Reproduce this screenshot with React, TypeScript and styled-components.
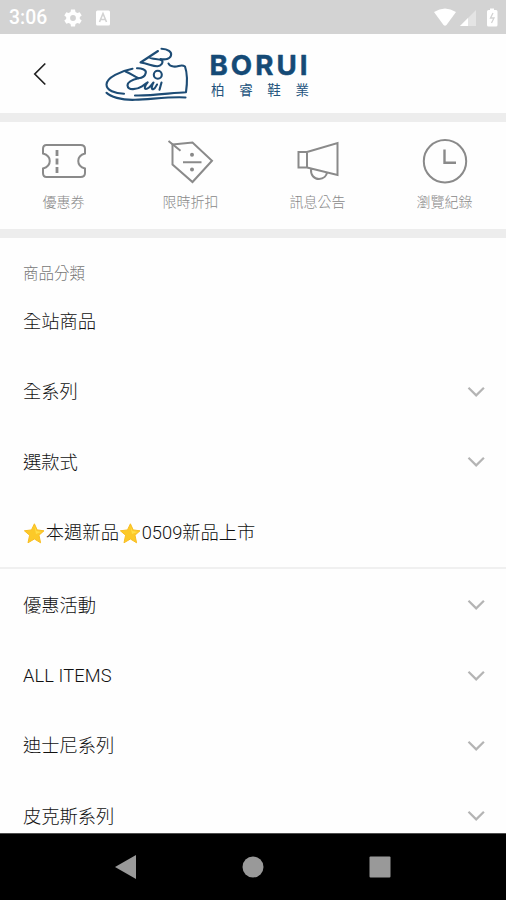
import React from "react";
import styled, { createGlobalStyle } from "styled-components";

const GlobalStyle = createGlobalStyle`
  * { box-sizing: border-box; }
  html, body { margin: 0; padding: 0; overflow: hidden; background: #fff; }
  svg { display: block; flex: none; }
`;

const Screen = styled.div`
  display: flex;
  flex-direction: column;
  width: 506px;
  height: 900px;
  overflow: hidden;
  background: #fefefe;
  font-family: Roboto, "Noto Sans CJK TC", sans-serif;
`;

const StatusBar = styled.div`
  display: flex;
  justify-content: space-between;
  align-items: center;
  flex: none;
  height: 34px;
  padding: 2px 8px 0 9px;
  background: #d3d3d3;
  color: #fff;
`;

const StatusGroup = styled.div<{ $gap: number }>`
  display: flex;
  align-items: center;
  gap: ${(p) => p.$gap}px;
`;

const Clock = styled.span`
  width: 40px;
  margin-right: 1px;
  font-size: 19.4px;
  font-weight: 500;
  line-height: 24px;
`;

const Header = styled.header`
  display: flex;
  align-items: center;
  flex: none;
  height: 79px;
  padding-left: 30px;
`;

const BackButton = styled.button`
  width: 20px;
  height: 28px;
  margin-right: 50px;
  padding: 0;
  border: 0;
  background: none;
`;

const Band = styled.div`
  flex: none;
  height: 9px;
  background: #ededed;
`;

const Shortcuts = styled.nav`
  display: grid;
  grid-template-columns: repeat(4, 127px);
  flex: none;
  height: 107px;
  padding-top: 15px;
`;

const Shortcut = styled.a`
  display: flex;
  flex-direction: column;
  align-items: center;
  color: #999;
`;

const ShortcutLabel = styled.span`
  margin-top: 5px;
  font-size: 14px;
  font-weight: 300;
  line-height: 20px;
  color: #888;
`;

const Catalog = styled.main`
  flex: 1;
  min-height: 0;
  overflow: hidden;
`;

const CatalogTitle = styled.h2`
  height: 47.4px;
  margin: 0;
  padding: 25px 0 0 23px;
  font-size: 15.5px;
  font-weight: 300;
  line-height: 22px;
  color: #777;
`;

const Row = styled.div`
  display: flex;
  align-items: center;
  justify-content: space-between;
  height: 70.3px;
  padding: 2px 21px 0 23px;
`;

const RowLabel = styled.span`
  display: flex;
  align-items: center;
  margin-top: 1px;
  font-size: 18.3px;
  font-weight: 300;
  line-height: 26px;
  color: #111;
  white-space: pre;
`;

const LatinLabel = styled.span`
  font-weight: 350;
  letter-spacing: 0.1px;
`;

const Divider = styled.div`
  height: 2px;
  margin-bottom: 0.6px;
  background: #f0f0f0;
`;

const NavBar = styled.footer`
  display: flex;
  justify-content: space-between;
  align-items: center;
  flex: none;
  height: 67px;
  padding: 0 115px;
  background: #000;
  border-top: 1px solid #4d4d4d;
`;

const Logo = () => (
  <svg width="220" height="66" viewBox="100 40 220 66" fill="none" stroke="#1d4c75" strokeWidth="2.1" strokeLinecap="round" strokeLinejoin="round">
    <path d="M132.5 67.8C121 70 106.5 76.5 106.5 83.5C106.5 89.5 115 92.5 124 92.7" />
    <path d="M106.5 91.8C110 95.5 121 99.3 135 98.8C153 98 171 95.5 185.5 96.5" />
    <path d="M135 94.5C150 95.2 174 91.5 186 91.2C187.3 82 187.3 72 185 65.5C181 62.5 178 66.5 173.5 65.5C170 65 169 64 168.5 62.5" />
    <path d="M158 50L140.5 61.5C148 62.5 153 65.5 157.5 65.2C161 65 163.5 61.5 162 59.5C159 57.5 152 58.5 149.5 56.5" />
    <path d="M161.5 47.8C168 48 172 51 171 54.5C170 58 165 59 160.5 58" />
    <path d="M137 67.2C141 67 146.5 68.5 145.8 71.7C145 75.5 142 77 138.5 77.2C133 78.5 127.5 80.5 127.5 84.3C128 90 137 88.5 142 85.3C144 84 146 82.5 147.7 81.3C145 84 143.8 88 146 88C149 88 151.5 84 153.5 81.5C151.5 85 151 88.5 153.3 88.2C155 87.7 156 85.5 157 83.5" />
    <path d="M125.5 70.5C130 72 134 75.5 138.5 77.2M161.5 81.5L159.5 88.7" />
    <circle cx="157.8" cy="73.8" r="4" />
    <text x="209.5" y="74" textLength="101" lengthAdjust="spacingAndGlyphs" letterSpacing="3" fill="#154a76" stroke="#154a76" strokeWidth=".5" fontFamily="Inter, sans-serif" fontWeight="700" fontSize="27.5">BORUI</text>
    <text x="211" y="93.5" textLength="98" fill="#24547d" stroke="none" fontFamily="Noto Sans CJK TC, sans-serif" fontWeight="400" fontSize="13.5">柏睿鞋業</text>
  </svg>
);

const ShortcutSvg = ({ children }: { children: React.ReactNode }) => (
  <svg width="50" height="50" viewBox="0 0 50 50" fill="none" stroke="#8a8a8a" strokeWidth="2">
    {children}
  </svg>
);

const TicketIcon = () => (
  <ShortcutSvg>
    <path d="M7.5 8H41.5Q46 8 46 12V16.5C37 19 37 29 46 31.5V36Q46 40 41.5 40H7.5Q4 40 4 36V31.5C13 29 13 19 4 16.5V12Q4 8 7.5 8Z" />
    <path d="M18 13V19M18 21.5V27.5M18 30V36" strokeWidth="2.8" />
  </ShortcutSvg>
);

const DiscountIcon = () => (
  <ShortcutSvg>
    <path d="M6.5 7.5L26.5 5.5L46 23.8L26.5 45L6.5 27.5Z" />
    <path d="M2.5 4L14.5 13.8M17 25.3H35.5" />
    <circle cx="26" cy="17.8" r="2" fill="#888" stroke="none" />
    <circle cx="26" cy="32.5" r="2" fill="#888" stroke="none" />
  </ShortcutSvg>
);

const MegaphoneIcon = () => (
  <ShortcutSvg>
    <path d="M5.5 15H14V30.5H5.5ZM14 15L44.5 6V38L14 30.5M18 32C17.5 38 21 42 26 42C31 42 33.5 38.5 34 35.5" />
  </ShortcutSvg>
);

const HistoryIcon = () => (
  <ShortcutSvg>
    <circle cx="25" cy="24.3" r="21.2" />
    <path d="M24.5 12.5V25.7H36" strokeWidth="2.4" />
  </ShortcutSvg>
);

const Chevron = () => (
  <svg width="18" height="12" viewBox="0 0 18 12" fill="none" stroke="#b4b4b4" strokeWidth="2.2">
    <path d="M1.5 1.8L9.2 9.4L16.9 1.8" />
  </svg>
);

const Star = () => (
  <svg width="22.8" height="22" viewBox="0 0 22.8 22">
    <path d="M11.4 1.8L14.2 7.9L21 8.8L16 13.2L17.6 20.8L11.4 17L5 20.8L6.6 13.2L1.4 8.8L8.5 7.9Z" fill="#fcc928" stroke="#f8bd22" strokeWidth="1" strokeLinejoin="round" />
    <path d="M11.4 4L13.5 9L18.5 10L13 12Z" fill="#ffdf48" />
  </svg>
);

const shortcuts = [
  { label: "優惠券", icon: <TicketIcon /> },
  { label: "限時折扣", icon: <DiscountIcon /> },
  { label: "訊息公告", icon: <MegaphoneIcon /> },
  { label: "瀏覽紀錄", icon: <HistoryIcon /> },
];

const categories = [
  { label: "全站商品", expandable: false },
  { label: "全系列", expandable: true },
  { label: "選款式", expandable: true },
  { label: <><Star />本週新品<Star />0509新品上市</>, expandable: false },
];

const collections = [
  { label: "優惠活動", expandable: true },
  { label: <LatinLabel>ALL ITEMS</LatinLabel>, expandable: true },
  { label: "迪士尼系列", expandable: true },
  { label: "皮克斯系列", expandable: true },
];

const Category = ({ label, expandable }: { label: React.ReactNode; expandable: boolean }) => (
  <Row>
    <RowLabel>{label}</RowLabel>
    {expandable && <Chevron />}
  </Row>
);

export default function App() {
  return (
    <>
      <GlobalStyle />
      <Screen>
        <StatusBar>
          <StatusGroup $gap={14}>
            <Clock>3:06</Clock>
            <svg width="18" height="18" viewBox="0 0 18 18">
              <path fillRule="evenodd" fill="#fff" d="M7 .5H11L11.5 3L13.3 4L15.7 3.2L17.7 6.6L15.8 8.1V9.9L17.7 11.4L15.7 14.8L13.3 14L11.5 15L11 17.5H7L6.5 15L4.7 14L2.3 14.8L.3 11.4L2.2 9.9V8.1L.3 6.6L2.3 3.2L4.7 4L6.5 3ZM9 6.1A2.9 2.9 0 1 0 9 11.9A2.9 2.9 0 1 0 9 6.1Z" />
            </svg>
            <svg width="14" height="16" viewBox="0 0 14 16">
              <rect y=".5" width="14" height="15" rx="1.5" fill="#fff" />
              <path d="M3.5 12L7 3.5L10.5 12M4.7 9.5H9.3" fill="none" stroke="#d3d3d3" strokeWidth="1.6" />
            </svg>
          </StatusGroup>
          <StatusGroup $gap={0}>
            <svg width="64" height="20" viewBox="434 8 64 20">
              <path d="M434 12Q445 5 456 12L446.5 25Q445 26.5 443.5 25Z" fill="#fff" />
              <path d="M476 10V26H460Z" fill="#e4e4e4" />
              <path d="M468 18V26H460Z" fill="#fff" />
              <path d="M490 8.5H494V10H496Q497.5 10 497.5 11.5V25Q497.5 26.5 496 26.5H488.5Q487 26.5 487 25V11.5Q487 10 488.5 10H490Z" fill="#fff" />
              <path d="M493 13L490.5 18H494L491.5 23" fill="none" stroke="#d3d3d3" strokeWidth="1.3" />
            </svg>
          </StatusGroup>
        </StatusBar>
        <Header>
          <BackButton aria-label="返回">
            <svg width="20" height="28" viewBox="0 0 20 28" fill="none" stroke="#222" strokeWidth="1.7">
              <path d="M15.3 3.5L4.8 14L15.3 24.5" />
            </svg>
          </BackButton>
          <Logo />
        </Header>
        <Band />
        <Shortcuts>
          {shortcuts.map((s) => (
            <Shortcut key={s.label}>
              {s.icon}
              <ShortcutLabel>{s.label}</ShortcutLabel>
            </Shortcut>
          ))}
        </Shortcuts>
        <Band />
        <Catalog>
          <CatalogTitle>商品分類</CatalogTitle>
          {categories.map((c, i) => <Category key={i} {...c} />)}
          <Divider />
          {collections.map((c, i) => <Category key={i} {...c} />)}
        </Catalog>
        <NavBar>
          <svg width="22" height="26" viewBox="0 0 22 26"><path d="M0 13L21 1V25Z" fill="#999" /></svg>
          <svg width="22" height="22" viewBox="0 0 22 22"><circle cx="11" cy="11" r="10.5" fill="#999" /></svg>
          <svg width="22" height="22" viewBox="0 0 22 22"><rect x=".5" y=".5" width="21" height="21" rx="1" fill="#999" /></svg>
        </NavBar>
      </Screen>
    </>
  );
}
